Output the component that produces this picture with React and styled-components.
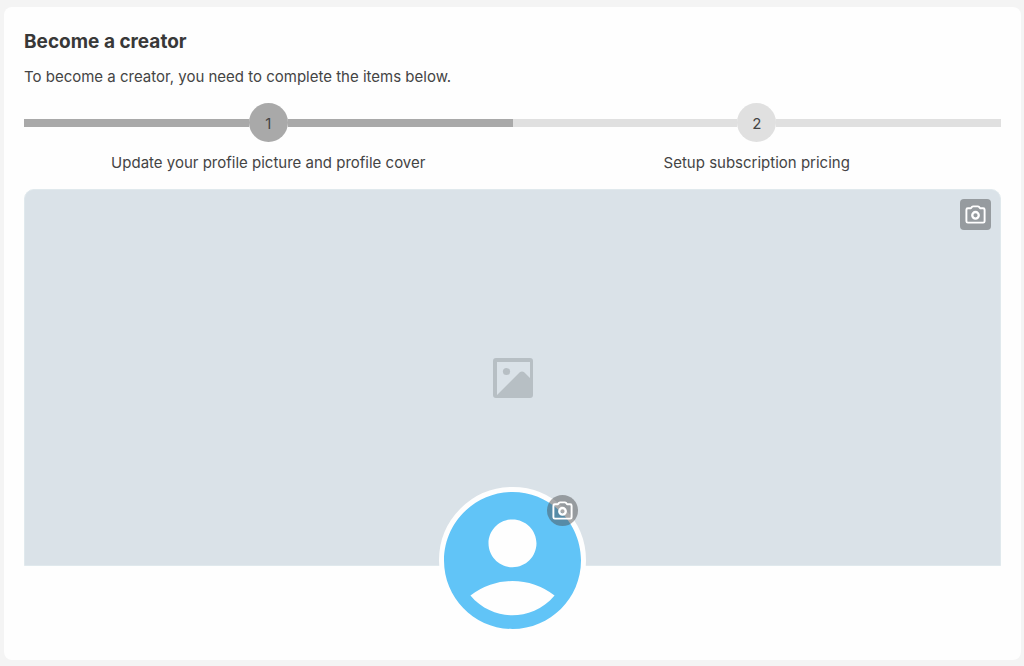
import React from "react";
import styled, { createGlobalStyle } from "styled-components";

const GlobalStyle = createGlobalStyle`
  * {
    box-sizing: border-box;
  }
  body {
    margin: 0;
    background-color: #f4f4f4;
    color: #444444;
    font-family: Inter, sans-serif;
    font-size: 15px;
    line-height: 24px;
  }
`;

const Page = styled.main`
  padding: 7px 3px 6px 4px;
`;

const Card = styled.section`
  padding: 20px 20px 26px;
  border-radius: 8px;
  background-color: #fefefe;
`;

const Title = styled.h1`
  margin: 0;
  font-size: 19px;
  font-weight: 700;
  line-height: 30px;
  color: #383838;
`;

const Intro = styled.p`
  margin: 8px 0 14px;
`;

const Steps = styled.ol`
  display: flex;
  margin: 0 0 14px;
  padding: 0;
  list-style: none;
`;

const Step = styled.li`
  flex: 1;
  display: flex;
  flex-direction: column;
  gap: 9px;
  text-align: center;
`;

const Track = styled.div`
  display: flex;
  align-items: center;

  &::before,
  &::after {
    content: "";
    flex: 1;
    height: 8px;
    background-color: ${({ $active }) => ($active ? "#a9a9a9" : "#e0e0e0")};
  }
`;

const StepNumber = styled.span`
  width: 39px;
  height: 39px;
  border-radius: 50%;
  line-height: 41px;
  background-color: ${({ $active }) => ($active ? "#a9a9a9" : "#e0e0e0")};
`;

const Cover = styled.div`
  position: relative;
  display: flex;
  align-items: center;
  justify-content: center;
  height: 377px;
  border: 1px solid #e0e9ed;
  border-radius: 10px 10px 0 0;
  background-color: #dae2e8;
`;

const Avatar = styled.div`
  position: relative;
  width: 147px;
  height: 147px;
  margin: -79px auto 0;
  border: 5px solid #fefefe;
  border-radius: 50%;
  background-color: #fefefe;

  > svg {
    display: block;
    width: 100%;
    height: 100%;
  }
`;

const UploadButton = styled.button`
  position: absolute;
  top: ${({ $round }) => ($round ? "3px" : "9px")};
  right: ${({ $round }) => ($round ? "3px" : "9px")};
  display: flex;
  align-items: center;
  justify-content: center;
  width: 31px;
  height: 31px;
  padding: 0;
  border: none;
  border-radius: ${({ $round }) => ($round ? "50%" : "4px")};
  background-color: rgba(75, 78, 80, 0.48);
  color: #ffffff;
  cursor: pointer;
`;

const CameraIcon = () => (
  <svg width="23" height="23" viewBox="0 0 24 24" fill="none" stroke="currentColor" strokeWidth="2" aria-hidden="true">
    <path
      d="M4 5.500h3.200l1.100-1.400Q8.800 3.500 9.600 3.500h4.800q.8 0 1.300.6L16.800 5.500H20q1.500 0 1.500 1.500v12q0 1.500-1.500 1.500H4q-1.500 0-1.500-1.500V7Q2.500 5.500 4 5.500z"
      strokeLinejoin="round"
    />
    <circle cx="12" cy="12.800" r="3.400" strokeWidth="2.400" />
  </svg>
);

const PictureIcon = () => (
  <svg width="40" height="40" viewBox="0 0 40 40" fill="#b7bfc4" aria-hidden="true">
    <path
      fillRule="evenodd"
      d="M3 0h34a3 3 0 0 1 3 3v34a3 3 0 0 1-3 3H3a3 3 0 0 1-3-3V3a3 3 0 0 1 3-3zm1 4v33l22.500-22.500q2.500-2 5 0L37 20V4z"
    />
    <circle cx="13.500" cy="13.500" r="3.600" />
  </svg>
);

const UserIcon = () => (
  <svg viewBox="2 2 20 20" fill="#61c4f7" aria-hidden="true">
    <path d="M12 2C6.480 2 2 6.480 2 12s4.480 10 10 10 10-4.480 10-10S17.520 2 12 2zm0 4c1.930 0 3.500 1.570 3.500 3.500S13.930 13 12 13s-3.500-1.570-3.500-3.500S10.070 6 12 6zm0 14c-2.030 0-4.430-.82-6.140-2.880a9.950 9.950 0 0 1 12.280 0C16.430 19.180 14.030 20 12 20z" />
  </svg>
);

const steps = [
  { label: "Update your profile picture and profile cover", active: true },
  { label: "Setup subscription pricing", active: false },
];

const App = () => (
  <>
    <GlobalStyle />
    <Page>
      <Card>
        <Title>Become a creator</Title>
        <Intro>To become a creator, you need to complete the items below.</Intro>
        <Steps>
          {steps.map(({ label, active }, index) => (
            <Step key={label}>
              <Track $active={active}>
                <StepNumber $active={active}>{index + 1}</StepNumber>
              </Track>
              <span>{label}</span>
            </Step>
          ))}
        </Steps>
        <Cover>
          <PictureIcon />
          <UploadButton type="button" aria-label="Change profile cover">
            <CameraIcon />
          </UploadButton>
        </Cover>
        <Avatar>
          <UserIcon />
          <UploadButton type="button" $round aria-label="Change profile picture">
            <CameraIcon />
          </UploadButton>
        </Avatar>
      </Card>
    </Page>
  </>
);

export default App;
